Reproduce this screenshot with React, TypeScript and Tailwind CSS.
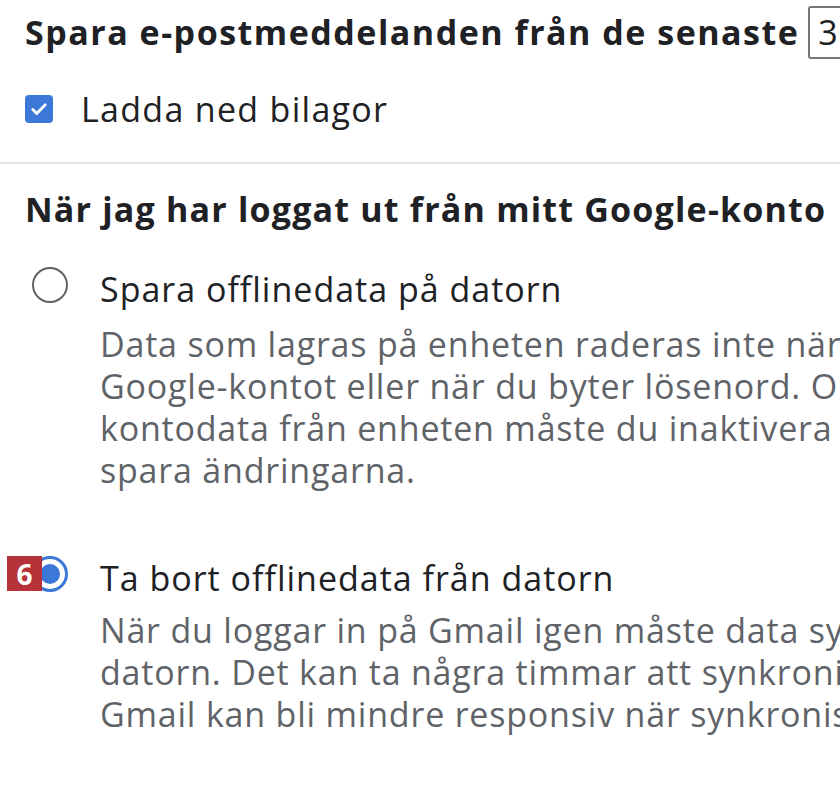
import React from "react";

const Radio = ({ checked }: { checked?: boolean }) => (
  <div className="mt-[-1px] h-[36px] w-[36px] shrink-0">
    {checked ? (
      <div className="flex h-full w-full items-center justify-center rounded-full border-[3px] border-[#3b78d8]">
        <div className="h-[20px] w-[20px] rounded-full bg-[#3b78d8]" />
      </div>
    ) : (
      <div className="h-full w-full rounded-full border-[2.5px] border-[#5f6368]" />
    )}
  </div>
);

const App = () => {
  return (
    <div
      className="h-[792px] w-[840px] overflow-hidden bg-white whitespace-nowrap"
      style={{ fontFamily: "'Open Sans', 'Noto Sans', sans-serif" }}
    >
      {/* offline-inställningar, övre delen */}
      <div className="pl-[25px] pt-[6px]">
        <div className="flex h-[53px] items-center gap-[9px]">
          <span className="text-[34px] font-bold leading-[53px] tracking-[1.5px] text-[#202124]">
            Spara e-postmeddelanden från de senaste
          </span>
          <div className="flex h-[53px] w-[100px] shrink-0 items-center rounded-[3px] border-2 border-[#767676] pl-[8px] text-[34px] text-[#202124]">
            3
          </div>
        </div>
        <div className="mt-[29px] flex h-[42px] items-center gap-[28px]">
          <div className="flex h-[28px] w-[28px] items-center justify-center rounded-[4px] bg-[#3b78d8]">
            <svg width="20" height="20" viewBox="0 0 24 24" fill="none">
              <path d="M4.5 12.5l4.8 4.8L19.5 7" stroke="white" strokeWidth="3.4" strokeLinecap="round" strokeLinejoin="round" />
            </svg>
          </div>
          <span className="text-[34px] leading-[42px] tracking-[1.3px] text-[#202124]">Ladda ned bilagor</span>
        </div>
      </div>

      <div className="mt-[32px] h-[2px] w-full bg-[#e3e3e3]" />

      {/* utloggning */}
      <div className="pl-[25px] pt-[24px]">
        <h2 className="text-[34px] font-bold leading-[42px] tracking-[1.2px] text-[#202124]">
          När jag har loggat ut från mitt Google-konto
        </h2>

        <div className="mt-[38px] flex gap-[32px] pl-[7px]">
          <Radio />
          <div>
            <div className="text-[34px] leading-[42px] tracking-[1px] text-[#202124]">
              Spara offlinedata på datorn
            </div>
            <div className="mt-[13px] text-[34px] leading-[42px] tracking-[0.8px] text-[#5f6368]">
              <div>Data som lagras på enheten raderas inte när du loggar ut från</div>
              <div>Google-kontot eller när du byter lösenord. Om du vill ta bort</div>
              <div>kontodata från enheten måste du inaktivera offlineläget och</div>
              <div>spara ändringarna.</div>
            </div>
          </div>
        </div>

        <div className="mt-[66px] flex gap-[32px] pl-[7px]">
          <div className="relative">
            <Radio checked />
            <div className="absolute left-[-25px] top-[-1px] flex h-[35px] w-[35px] items-center justify-center bg-[#b8323a] text-[28px] font-bold text-white">
              6
            </div>
          </div>
          <div>
            <div className="text-[34px] leading-[42px] tracking-[1px] text-[#202124]">
              Ta bort offlinedata från datorn
            </div>
            <div className="mt-[10px] text-[34px] leading-[42px] tracking-[0.8px] text-[#5f6368]">
              <div>När du loggar in på Gmail igen måste data synkroniseras till</div>
              <div>datorn. Det kan ta några timmar att synkronisera postlådan.</div>
              <div>Gmail kan bli mindre responsiv när synkroniseringen pågår.</div>
            </div>
          </div>
        </div>
      </div>
    </div>
  );
};

export default App;
